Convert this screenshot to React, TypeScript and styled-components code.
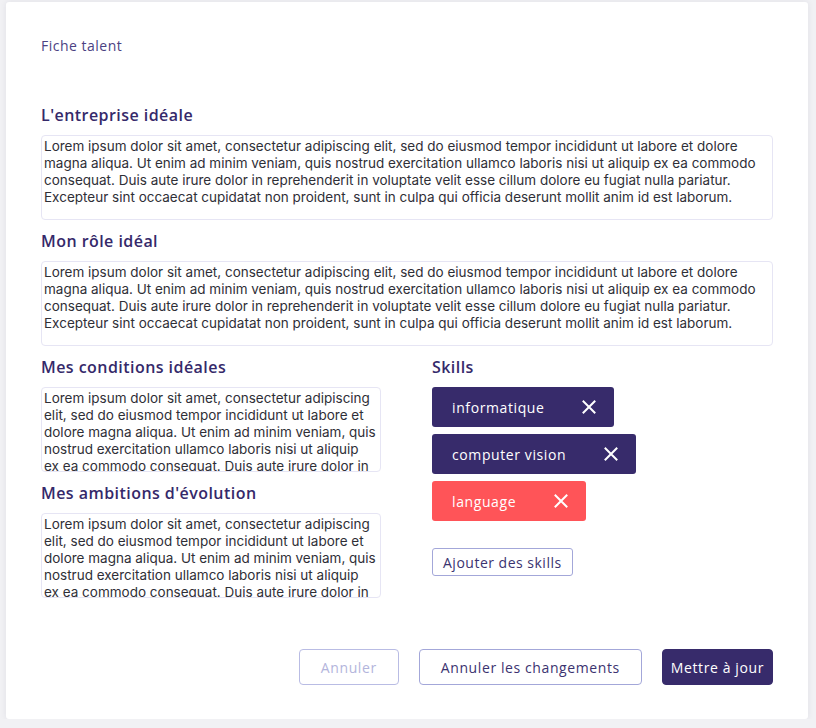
import React from "react";
import styled, { createGlobalStyle } from "styled-components";

const Global = createGlobalStyle`
  html, body { margin: 0; padding: 0; background: #f1f1f4; }
  body { padding: 2px 8px 0 6px; font-family: "Open Sans", "Liberation Sans", sans-serif; }
  * { box-sizing: border-box; }
`;

const Card = styled.div`
  background: #fff;
  border-radius: 3px;
  box-shadow: 0 0 6px rgba(40, 40, 80, 0.08);
  padding: 36px 35px 34px 35px;
  height: 717px;
  display: flex;
  flex-direction: column;
`;

const Crumb = styled.div`
  font-size: 14px;
  line-height: 16px;
  letter-spacing: 0.5px;
  color: #4b4283;
  margin-bottom: 51px;
`;

const Section = styled.div`
  display: flex;
  flex-direction: column;
  margin-bottom: 11px;
`;

const Heading = styled.h2`
  margin: 0 0 10px 0;
  font-size: 16px;
  line-height: 20px;
  font-weight: 600;
  letter-spacing: 0.45px;
  color: #35296a;
`;

const Area = styled.textarea`
  display: block;
  width: 100%;
  height: 85px;
  padding: 2px 3.5px 2px 2px;
  border: 1px solid #e6e5f4;
  border-radius: 4px;
  resize: none;
  overflow: hidden;
  font-family: Inter, "Liberation Sans", sans-serif;
  font-size: 13.5px;
  line-height: 17px;
  color: #2f2f37;
  outline: none;
`;

const Columns = styled.div`
  display: grid;
  grid-template-columns: 340px 1fr;
  column-gap: 51px;
`;

const Column = styled.div`
  display: flex;
  flex-direction: column;
`;

const ChipList = styled.div`
  display: flex;
  flex-direction: column;
  align-items: flex-start;
  gap: 7px;
`;

const Chip = styled.div<{ $tone: "dark" | "red" }>`
  display: flex;
  align-items: center;
  height: 40px;
  border-radius: 3px;
  background: ${(p) => (p.$tone === "red" ? "#ff5458" : "#372b6b")};
  color: #fff;
  font-size: 14px;
  letter-spacing: 0.6px;
  padding-left: 20px;
`;

const ChipLabel = styled.span`
  padding-right: 20px;
`;

const ChipClose = styled.button`
  display: flex;
  align-items: center;
  justify-content: center;
  width: 50px;
  height: 40px;
  border: none;
  background: transparent;
  padding: 0;
  color: #fff;
  cursor: pointer;
`;

const AddButton = styled.button`
  margin-top: 27px;
  align-self: flex-start;
  height: 28px;
  padding: 0 10px;
  border: 1px solid #a3a7d9;
  border-radius: 3px;
  background: #fff;
  color: #3b3370;
  font-family: inherit;
  font-size: 14px;
  letter-spacing: 0.5px;
`;

const Footer = styled.div`
  margin-top: 40px;
  display: flex;
  justify-content: flex-end;
  gap: 20px;
`;

const FooterButton = styled.button<{ $variant: "disabled" | "outline" | "primary" }>`
  height: 36px;
  padding: 0 ${(p) => (p.$variant === "primary" ? "8px" : "21px")};
  border-radius: 4px;
  font-family: inherit;
  font-size: 14px;
  letter-spacing: 0.6px;
  border: 1px solid
    ${(p) => (p.$variant === "primary" ? "#372b6b" : p.$variant === "disabled" ? "#b9bce4" : "#a3a7d9")};
  background: ${(p) => (p.$variant === "primary" ? "#372b6b" : "#fff")};
  color: ${(p) => (p.$variant === "primary" ? "#fff" : p.$variant === "disabled" ? "#b3b5dc" : "#3b3370")};
`;

const Cross = () => (
  <svg width="14" height="14" viewBox="0 0 14 14" fill="none" stroke="currentColor" strokeWidth="2" strokeLinecap="square">
    <path d="M1.5 1.5 L12.5 12.5 M12.5 1.5 L1.5 12.5" />
  </svg>
);

const LONG =
  "Lorem ipsum dolor sit amet, consectetur adipiscing elit, sed do eiusmod tempor incididunt ut labore et dolore magna aliqua. Ut enim ad minim veniam, quis nostrud exercitation ullamco laboris nisi ut aliquip ex ea commodo consequat. Duis aute irure dolor in reprehenderit in voluptate velit esse cillum dolore eu fugiat nulla pariatur. Excepteur sint occaecat cupidatat non proident, sunt in culpa qui officia deserunt mollit anim id est laborum.";

const skills: { name: string; tone: "dark" | "red" }[] = [
  { name: "informatique", tone: "dark" },
  { name: "computer vision", tone: "dark" },
  { name: "language", tone: "red" },
];

export default function App() {
  return (
    <>
      <Global />
      <Card>
        <Crumb>Fiche talent</Crumb>
        <Section>
          <Heading>L'entreprise idéale</Heading>
          <Area readOnly defaultValue={LONG} />
        </Section>
        <Section>
          <Heading>Mon rôle idéal</Heading>
          <Area readOnly defaultValue={LONG} />
        </Section>
        <Columns>
          <Column>
            <Section>
              <Heading>Mes conditions idéales</Heading>
              <Area readOnly defaultValue={LONG} />
            </Section>
            <Section>
              <Heading>Mes ambitions d'évolution</Heading>
              <Area readOnly defaultValue={LONG} />
            </Section>
          </Column>
          <Column>
            <Heading>Skills</Heading>
            <ChipList>
              {skills.map((s) => (
                <Chip key={s.name} $tone={s.tone}>
                  <ChipLabel>{s.name}</ChipLabel>
                  <ChipClose aria-label="Supprimer">
                    <Cross />
                  </ChipClose>
                </Chip>
              ))}
            </ChipList>
            <AddButton>Ajouter des skills</AddButton>
          </Column>
        </Columns>
        <Footer>
          <FooterButton $variant="disabled">Annuler</FooterButton>
          <FooterButton $variant="outline">Annuler les changements</FooterButton>
          <FooterButton $variant="primary">Mettre à jour</FooterButton>
        </Footer>
      </Card>
    </>
  );
}
